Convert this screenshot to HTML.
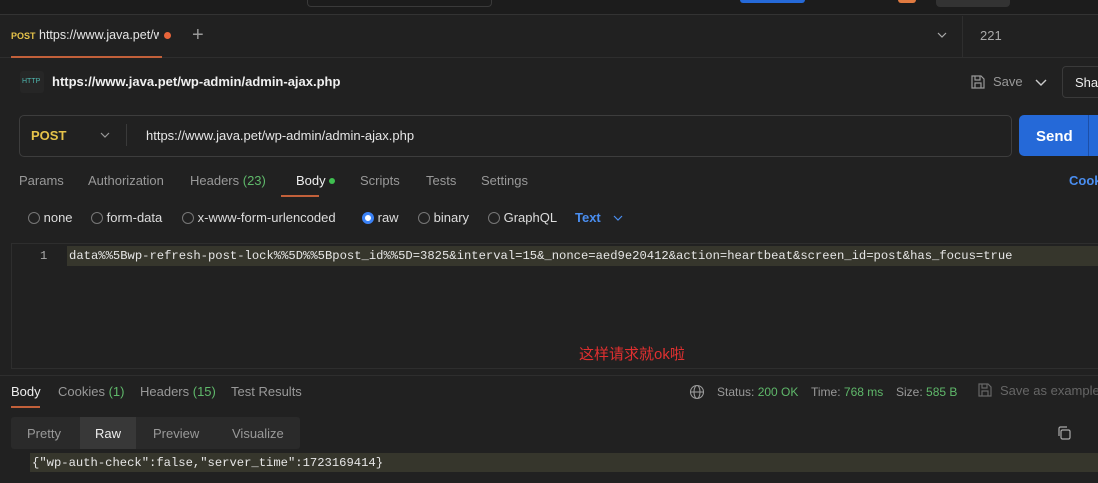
<!DOCTYPE html>
<html><head><meta charset="utf-8"><style>
*{margin:0;padding:0;box-sizing:border-box}
body{width:1098px;height:483px;background:#212121;font-family:"Liberation Sans",sans-serif;color:#ccc;position:relative;overflow:hidden;font-size:13px}
.a{position:absolute;white-space:nowrap}
.mono{font-family:"Liberation Mono",monospace;font-size:12.2px;color:#e6e6e6}
.g{color:#5fb86a}
.r{width:12px;height:12px;border:1px solid #777;border-radius:50%;display:inline-block}
.st{font-size:12px}
</style></head><body>
<div class="a" style="left:0;top:0;width:1098px;height:15px;background:#1c1c1c;border-bottom:1px solid #333"></div>
<div class="a" style="left:307px;top:0;width:185px;height:7px;border:1px solid #3a3a3a;border-top:none;border-radius:0 0 4px 4px"></div>
<div class="a" style="left:740px;top:0;width:65px;height:3px;background:#2569d8;border-radius:0 0 3px 3px"></div>
<div class="a" style="left:898px;top:0;width:18px;height:3px;background:#e07a40;border-radius:0 0 8px 8px"></div>
<div class="a" style="left:936px;top:0;width:74px;height:7px;background:#333;border-radius:0 0 4px 4px"></div>
<div class="a" style="left:0;top:57px;width:1098px;height:1px;background:#2e2e2e"></div>
<div class="a" style="left:962px;top:16px;width:1px;height:41px;background:#2e2e2e"></div>
<div class="a" style="left:11px;top:31px;font-size:9px;font-weight:bold;color:#e6c34a">POST</div>
<div class="a" style="left:39px;top:28px;color:#e6e6e6;font-size:12.5px;width:120px;overflow:hidden">https://www.java.pet/w</div>
<div class="a" style="left:164px;top:32px;width:7px;height:7px;border-radius:50%;background:#e8643a"></div>
<div class="a" style="left:11px;top:56px;width:151px;height:2px;background:#c2603a"></div>
<div class="a" style="left:192px;top:24px;font-size:20px;color:#999;font-weight:300">+</div>
<svg class="a" style="left:937px;top:31px" width="10" height="8" viewBox="0 0 10 8" fill="none" stroke="#aaa" stroke-width="1.2"><path d="M1 2l4 4 4-4"/></svg>
<div class="a" style="left:980px;top:28px;color:#aaa">221</div>
<div class="a" style="left:20px;top:71px;width:24px;height:22px;background:#262626;border-radius:3px;color:#4fb8b0;font-size:7px;padding:7px 2px">HTTP</div>
<div class="a" style="left:52px;top:74px;color:#f0f0f0;font-weight:bold;font-size:13px">https://www.java.pet/wp-admin/admin-ajax.php</div>
<svg class="a" style="left:970px;top:74px" width="16" height="16" viewBox="0 0 16 16" fill="none" stroke="#999" stroke-width="1.2"><path d="M2 2h9l3 3v9H2z M5 2v4h5V2 M5 14v-5h6v5"/></svg>
<div class="a" style="left:993px;top:74px;color:#999">Save</div>
<svg class="a" style="left:1035px;top:78px" width="12" height="8" viewBox="0 0 12 8" fill="none" stroke="#ccc" stroke-width="1.4"><path d="M1 2l5 5 5-5"/></svg>
<div class="a" style="left:1062px;top:66px;width:50px;height:32px;border:1px solid #3a3a3a;border-radius:4px;padding:8px 12px;color:#eee">Share</div>
<div class="a" style="left:19px;top:115px;width:993px;height:42px;border:1px solid #3d3d3d;border-radius:5px"></div>
<div class="a" style="left:31px;top:128px;color:#e6c34a;font-weight:bold;font-size:13px">POST</div>
<svg class="a" style="left:100px;top:131px" width="10" height="8" viewBox="0 0 10 8" fill="none" stroke="#999" stroke-width="1.2"><path d="M1 2l4 4 4-4"/></svg>
<div class="a" style="left:126px;top:124px;width:1px;height:22px;background:#3a3a3a"></div>
<div class="a" style="left:146px;top:128px;color:#e6e6e6">https://www.java.pet/wp-admin/admin-ajax.php</div>
<div class="a" style="left:1019px;top:115px;width:90px;height:41px;background:#2569d8;border-radius:5px"></div>
<div class="a" style="left:1036px;top:128px;color:#fff;font-weight:bold;font-size:15px">Send</div>
<div class="a" style="left:1088px;top:115px;width:1px;height:41px;background:#1c4fa8"></div>
<div class="a" style="left:19px;top:173px;color:#999">Params</div>
<div class="a" style="left:88px;top:173px;color:#999">Authorization</div>
<div class="a" style="left:190px;top:173px;color:#999">Headers <span class="g">(23)</span></div>
<div class="a" style="left:296px;top:173px;color:#eee">Body</div>
<div class="a" style="left:329px;top:178px;width:6px;height:6px;border-radius:50%;background:#3fbf50"></div>
<div class="a" style="left:281px;top:195px;width:38px;height:2px;background:#c2603a"></div>
<div class="a" style="left:360px;top:173px;color:#999">Scripts</div>
<div class="a" style="left:426px;top:173px;color:#999">Tests</div>
<div class="a" style="left:481px;top:173px;color:#999">Settings</div>
<div class="a" style="left:1069px;top:173px;color:#4a8ef0;font-weight:bold">Cookies</div>
<div class="a" style="left:28px;top:210px;color:#ddd"><span class="r" style="vertical-align:-2px"></span> none</div>
<div class="a" style="left:91px;top:210px;color:#ddd"><span class="r" style="vertical-align:-2px"></span> form-data</div>
<div class="a" style="left:182px;top:210px;color:#ddd"><span class="r" style="vertical-align:-2px"></span> x-www-form-urlencoded</div>
<div class="a" style="left:362px;top:210px;color:#ddd"><span class="r" style="vertical-align:-2px;border:3px solid #3b82f6;background:#fff"></span> raw</div>
<div class="a" style="left:418px;top:210px;color:#ddd"><span class="r" style="vertical-align:-2px"></span> binary</div>
<div class="a" style="left:488px;top:210px;color:#ddd"><span class="r" style="vertical-align:-2px"></span> GraphQL</div>
<div class="a" style="left:575px;top:210px;color:#4a8ef0;font-weight:bold">Text</div>
<svg class="a" style="left:613px;top:214px" width="10" height="8" viewBox="0 0 10 8" fill="none" stroke="#4a8ef0" stroke-width="1.2"><path d="M1 2l4 4 4-4"/></svg>
<div class="a" style="left:11px;top:243px;width:1100px;height:126px;border:1px solid #2e2e2e"></div>
<div class="a" style="left:67px;top:246px;width:1040px;height:20px;background:#36362c"></div>
<div class="a mono" style="left:40px;top:249px;color:#aaa">1</div>
<div class="a mono" style="left:69px;top:249px">data%%5Bwp-refresh-post-lock%%5D%%5Bpost_id%%5D=3825&amp;interval=15&amp;_nonce=aed9e20412&amp;action=heartbeat&amp;screen_id=post&amp;has_focus=true</div>
<div class="a" style="left:579px;top:343px;color:#e03030;font-size:15px;font-family:'Liberation Sans','Noto Sans CJK SC',sans-serif">这样请求就ok啦</div>
<div class="a" style="left:0;top:375px;width:1098px;height:1px;background:#2e2e2e"></div>
<div class="a" style="left:11px;top:384px;color:#eee">Body</div>
<div class="a" style="left:11px;top:406px;width:29px;height:2px;background:#c2603a"></div>
<div class="a" style="left:58px;top:384px;color:#999">Cookies <span class="g">(1)</span></div>
<div class="a" style="left:140px;top:384px;color:#999">Headers <span class="g">(15)</span></div>
<div class="a" style="left:231px;top:384px;color:#999">Test Results</div>
<svg class="a" style="left:689px;top:384px" width="16" height="16" viewBox="0 0 16 16" fill="none" stroke="#999" stroke-width="1.1"><circle cx="8" cy="8" r="6.5"/><ellipse cx="8" cy="8" rx="3" ry="6.5"/><path d="M1.5 8h13"/></svg>
<div class="a st" style="left:717px;top:385px;color:#999">Status: <span class="g">200 OK</span></div>
<div class="a st" style="left:811px;top:385px;color:#999">Time: <span class="g">768 ms</span></div>
<div class="a st" style="left:896px;top:385px;color:#999">Size: <span class="g">585 B</span></div>
<svg class="a" style="left:977px;top:382px" width="16" height="16" viewBox="0 0 16 16" fill="none" stroke="#666" stroke-width="1.2"><path d="M2 2h9l3 3v9H2z M5 2v4h5V2 M5 14v-5h6v5"/></svg>
<div class="a" style="left:1000px;top:383px;color:#666">Save as example</div>
<div class="a" style="left:11px;top:417px;width:289px;height:32px;background:#2a2a2a;border-radius:3px"></div>
<div class="a" style="left:80px;top:417px;width:56px;height:32px;background:#383838"></div>
<div class="a" style="left:27px;top:426px;color:#999">Pretty</div>
<div class="a" style="left:95px;top:426px;color:#eee">Raw</div>
<div class="a" style="left:153px;top:426px;color:#999">Preview</div>
<div class="a" style="left:232px;top:426px;color:#999">Visualize</div>
<svg class="a" style="left:1056px;top:425px" width="16" height="16" viewBox="0 0 16 16" fill="none" stroke="#aaa" stroke-width="1.2"><rect x="5" y="5" width="9" height="9" rx="1.5"/><path d="M3 11V3.5A1.5 1.5 0 0 1 4.5 2H11"/></svg>
<div class="a" style="left:30px;top:453px;width:1080px;height:19px;background:#36362c"></div>
<div class="a mono" style="left:32px;top:456px">{"wp-auth-check":false,"server_time":1723169414}</div>
</body></html>
